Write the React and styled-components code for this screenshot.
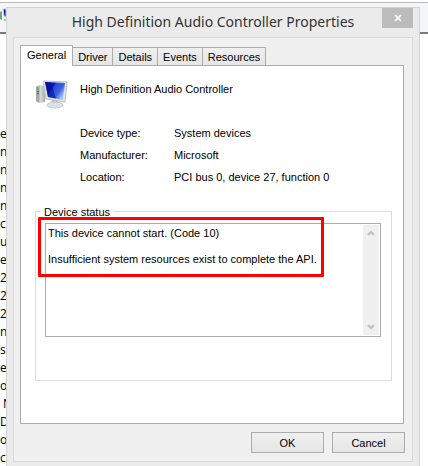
import styled, { createGlobalStyle } from "styled-components";

const rows = [
    "e", "n", "n", "n", "n", "c", "u", "e", "2", "2",
    "2", "n", "s", "e", "o", " N", "D", "o", "c",
];

const tabs = ["General", "Driver", "Details", "Events", "Resources"];

const details = [
    { label: "Device type:", value: "System devices" },
    { label: "Manufacturer:", value: "Microsoft" },
    { label: "Location:", value: "PCI bus 0, device 27, function 0" },
];

const statusText = `This device cannot start. (Code 10)

Insufficient system resources exist to complete the API.`;

function ComputerIcon() {
    return (
        <svg width="32" height="30" viewBox="0 0 32 30" aria-hidden="true">
            <defs>
                <linearGradient id="screen" x1="0" y1="0" x2="1" y2="0.6">
                    <stop offset="0" stopColor="#0a1a8c" />
                    <stop offset="0.4" stopColor="#0618c0" />
                    <stop offset="0.45" stopColor="#2a48d8" />
                    <stop offset="0.75" stopColor="#3c62e0" />
                    <stop offset="1" stopColor="#a8c8f8" />
                </linearGradient>
                <linearGradient id="tower" x1="0" y1="0" x2="1" y2="0">
                    <stop offset="0" stopColor="#6f7672" />
                    <stop offset="0.5" stopColor="#d5d9d6" />
                    <stop offset="1" stopColor="#a9afac" />
                </linearGradient>
            </defs>
            <path d="M0 7L4 5L9 6V22L4 23L0 21Z" fill="url(#tower)" />
            <path d="M0 7L3 8V23L0 21Z" fill="#a3a9a6" />
            <path d="M1 11L3 12M1 13L3 14" stroke="#5d6360" />
            <path d="M1 7L3 8V10L1 9Z" fill="#39d43c" />
            <path d="M16 20L22 21L23 25H15Z" fill="#b9bebf" />
            <ellipse cx="19" cy="25" rx="8" ry="3" fill="#dfe2e3" stroke="#c3c8c9" />
            <path d="M7 1L31 2L29 22L10 19Z" fill="#e2e6e8" stroke="#b8bec2" />
            <path d="M9 2L29 3L27 20L12 17Z" fill="url(#screen)" />
            <path d="M9 2L15 2.5L20 18.5L12 17Z" fill="#04109a" opacity="0.6" />
        </svg>
    );
}

function ToolbarIcon() {
    return (
        <svg width="6" height="14" viewBox="0 0 6 14" aria-hidden="true">
            <path d="M0 4L2 3V12L0 11Z" fill="#8d9490" />
            <path d="M0 8H1V10H0Z" fill="#35c83a" />
            <path d="M3 1L6 1V9L4 8Z" fill="#0a1a9c" stroke="#c9ced2" />
            <path d="M3 12Q5 10 6 11V13H4Z" fill="#b9bebf" />
        </svg>
    );
}

function CloseIcon() {
    return (
        <svg width="8" height="8" viewBox="0 0 8 8" aria-hidden="true">
            <path d="M1 1L7 7M7 1L1 7" stroke="#fff" strokeWidth="1.6" />
        </svg>
    );
}

function ArrowIcon({ down }) {
    return (
        <svg width="8" height="6" viewBox="0 0 8 6" aria-hidden="true">
            <path d={down ? "M1 1L4 4L7 1" : "M1 5L4 2L7 5"} fill="none" stroke="#bfbfbf" strokeWidth="2" />
        </svg>
    );
}

function App() {
    return (
        <Screen>
            <GlobalStyle />

            <Toolbar>
                <ToolbarIcon />
            </Toolbar>
            <RowList>
                {rows.map((row, i) => (
                    <li key={i}>{row}</li>
                ))}
            </RowList>

            <Dialog role="dialog" aria-labelledby="dialog-title">
                <TitleBar>
                    <Title id="dialog-title">High Definition Audio Controller Properties</Title>
                    <CloseButton type="button" aria-label="Close">
                        <CloseIcon />
                    </CloseButton>
                </TitleBar>

                <DialogBody>
                    <TabList role="tablist">
                        {tabs.map((tab, i) => (
                            <Tab key={tab} type="button" role="tab" aria-selected={i === 0} $active={i === 0}>
                                {tab}
                            </Tab>
                        ))}
                    </TabList>

                    <TabPanel role="tabpanel">
                        <DeviceHeader>
                            <ComputerIcon />
                            <DeviceName>High Definition Audio Controller</DeviceName>
                        </DeviceHeader>

                        <DetailList>
                            {details.map(({ label, value }) => (
                                <DetailRow key={label}>
                                    <dt>{label}</dt>
                                    <dd>{value}</dd>
                                </DetailRow>
                            ))}
                        </DetailList>

                        <StatusGroup>
                            <GroupLabel htmlFor="status">Device status</GroupLabel>
                            <StatusBox>
                                <StatusText id="status" readOnly value={statusText} />
                                <Scrollbar>
                                    <ArrowIcon />
                                    <ArrowIcon down />
                                </Scrollbar>
                            </StatusBox>
                            <Highlight />
                        </StatusGroup>
                    </TabPanel>

                    <ButtonRow>
                        <DialogButton type="button">OK</DialogButton>
                        <DialogButton type="button">Cancel</DialogButton>
                    </ButtonRow>
                </DialogBody>
            </Dialog>
        </Screen>
    );
}

export default App;

const GlobalStyle = createGlobalStyle`
* {
    box-sizing: border-box;
}

body {
    margin: 0;
    background: #fff;
}

button, textarea {
    font: inherit;
    color: inherit;
}
`;

const Screen = styled.div`
position: relative;
height: 100vh;
overflow: hidden;
background: #fff;
color: #000;
font-family: "Liberation Sans", sans-serif;
font-size: 11px;
line-height: 14px;
`;

const Toolbar = styled.div`
height: 34px;
padding-top: 6px;
border-top: 2px solid #fff;
border-bottom: 2px solid #7b7b7b;
background: #f5f6f7;
box-shadow: inset 0 1px #b8bbbe;
`;

const RowList = styled.ul`
margin: 0;
padding: 91px 0 0;
list-style: none;
font-family: "Open Sans", sans-serif;
font-size: 12px;
line-height: 18px;
white-space: pre;
`;

const Dialog = styled.section`
position: absolute;
top: 7px;
left: 6px;
right: 8px;
padding: 0 6px 6px;
border: 1px solid #d2d2d2;
background: #ebebeb;
`;

const TitleBar = styled.header`
position: relative;
display: flex;
justify-content: center;
height: 29px;
padding: 4px 0;
`;

const Title = styled.h1`
margin: 0;
color: #333;
font-family: "Noto Sans", sans-serif;
font-size: 14px;
font-weight: 400;
line-height: 20px;
white-space: nowrap;
`;

const CloseButton = styled.button`
position: absolute;
top: 0;
right: 0;
display: flex;
align-items: center;
justify-content: center;
width: 31px;
height: 20px;
padding: 0;
border: 0;
background: #bcbcbc;
`;

const DialogBody = styled.div`
padding: 7px 8px 8px 6px;
border: 1px solid #dadada;
background: #f0f0f0;
`;

const TabList = styled.div`
display: flex;
align-items: flex-end;
height: 20px;
`;

const Tab = styled.button`
position: relative;
height: ${({ $active }) => ($active ? 21 : 18)}px;
margin-bottom: ${({ $active }) => ($active ? -1 : 0)}px;
padding: ${({ $active }) => ($active ? "0 6px 2px" : "0 5px")};
border: 1px solid #acacac;
border-width: ${({ $active }) => ($active ? "1px 1px 0" : "1px 1px 0 0")};
background: ${({ $active }) => ($active ? "#fff" : "linear-gradient(#f0f0f0, #e5e5e5)")};
`;

const TabPanel = styled.div`
padding: 14px 11px 42px 14px;
border: 1px solid #acacac;
background: #fff;
`;

const DeviceHeader = styled.div`
display: flex;
gap: 12px;
height: 46px;
padding-left: 1px;
`;

const DeviceName = styled.h2`
margin: 2px 0 0;
font-size: 11px;
font-weight: 400;
line-height: 14px;
`;

const DetailList = styled.dl`
margin: 0;
padding-left: 45px;
`;

const DetailRow = styled.div`
display: grid;
grid-template-columns: 94px 1fr;
line-height: 14px;
margin-bottom: 8px;

dd {
    margin: 0;
}
`;

const StatusGroup = styled.div`
position: relative;
height: 170px;
margin-top: 27px;
padding: 11px 10px 0 9px;
border: 1px solid #dcdcdc;
`;

const GroupLabel = styled.label`
position: absolute;
top: -7px;
left: 5px;
padding: 0 3px;
background: #fff;
`;

const StatusBox = styled.div`
display: flex;
height: 114px;
padding: 1px;
border: 1px solid #acacac;
`;

const StatusText = styled.textarea`
flex: 1;
min-width: 0;
padding: 2px 1px;
border: 0;
outline: 0;
overflow: hidden;
resize: none;
background: #fff;
line-height: 13px;
`;

const Scrollbar = styled.div`
display: flex;
flex-direction: column;
align-items: center;
justify-content: space-between;
width: 16px;
padding: 5px 0;
background: #f0f0f0;
`;

const Highlight = styled.div`
position: absolute;
top: 5px;
left: 2px;
right: 67px;
height: 60px;
border: 3px solid #f00;
border-radius: 1px;
pointer-events: none;
`;

const ButtonRow = styled.div`
display: flex;
justify-content: flex-end;
gap: 8px;
margin: 8px -1px 0 0;
`;

const DialogButton = styled.button`
width: 73px;
height: 21px;
padding: 0;
border: 1px solid #acacac;
background: linear-gradient(#f0f0f0, #e5e5e5);
`;
